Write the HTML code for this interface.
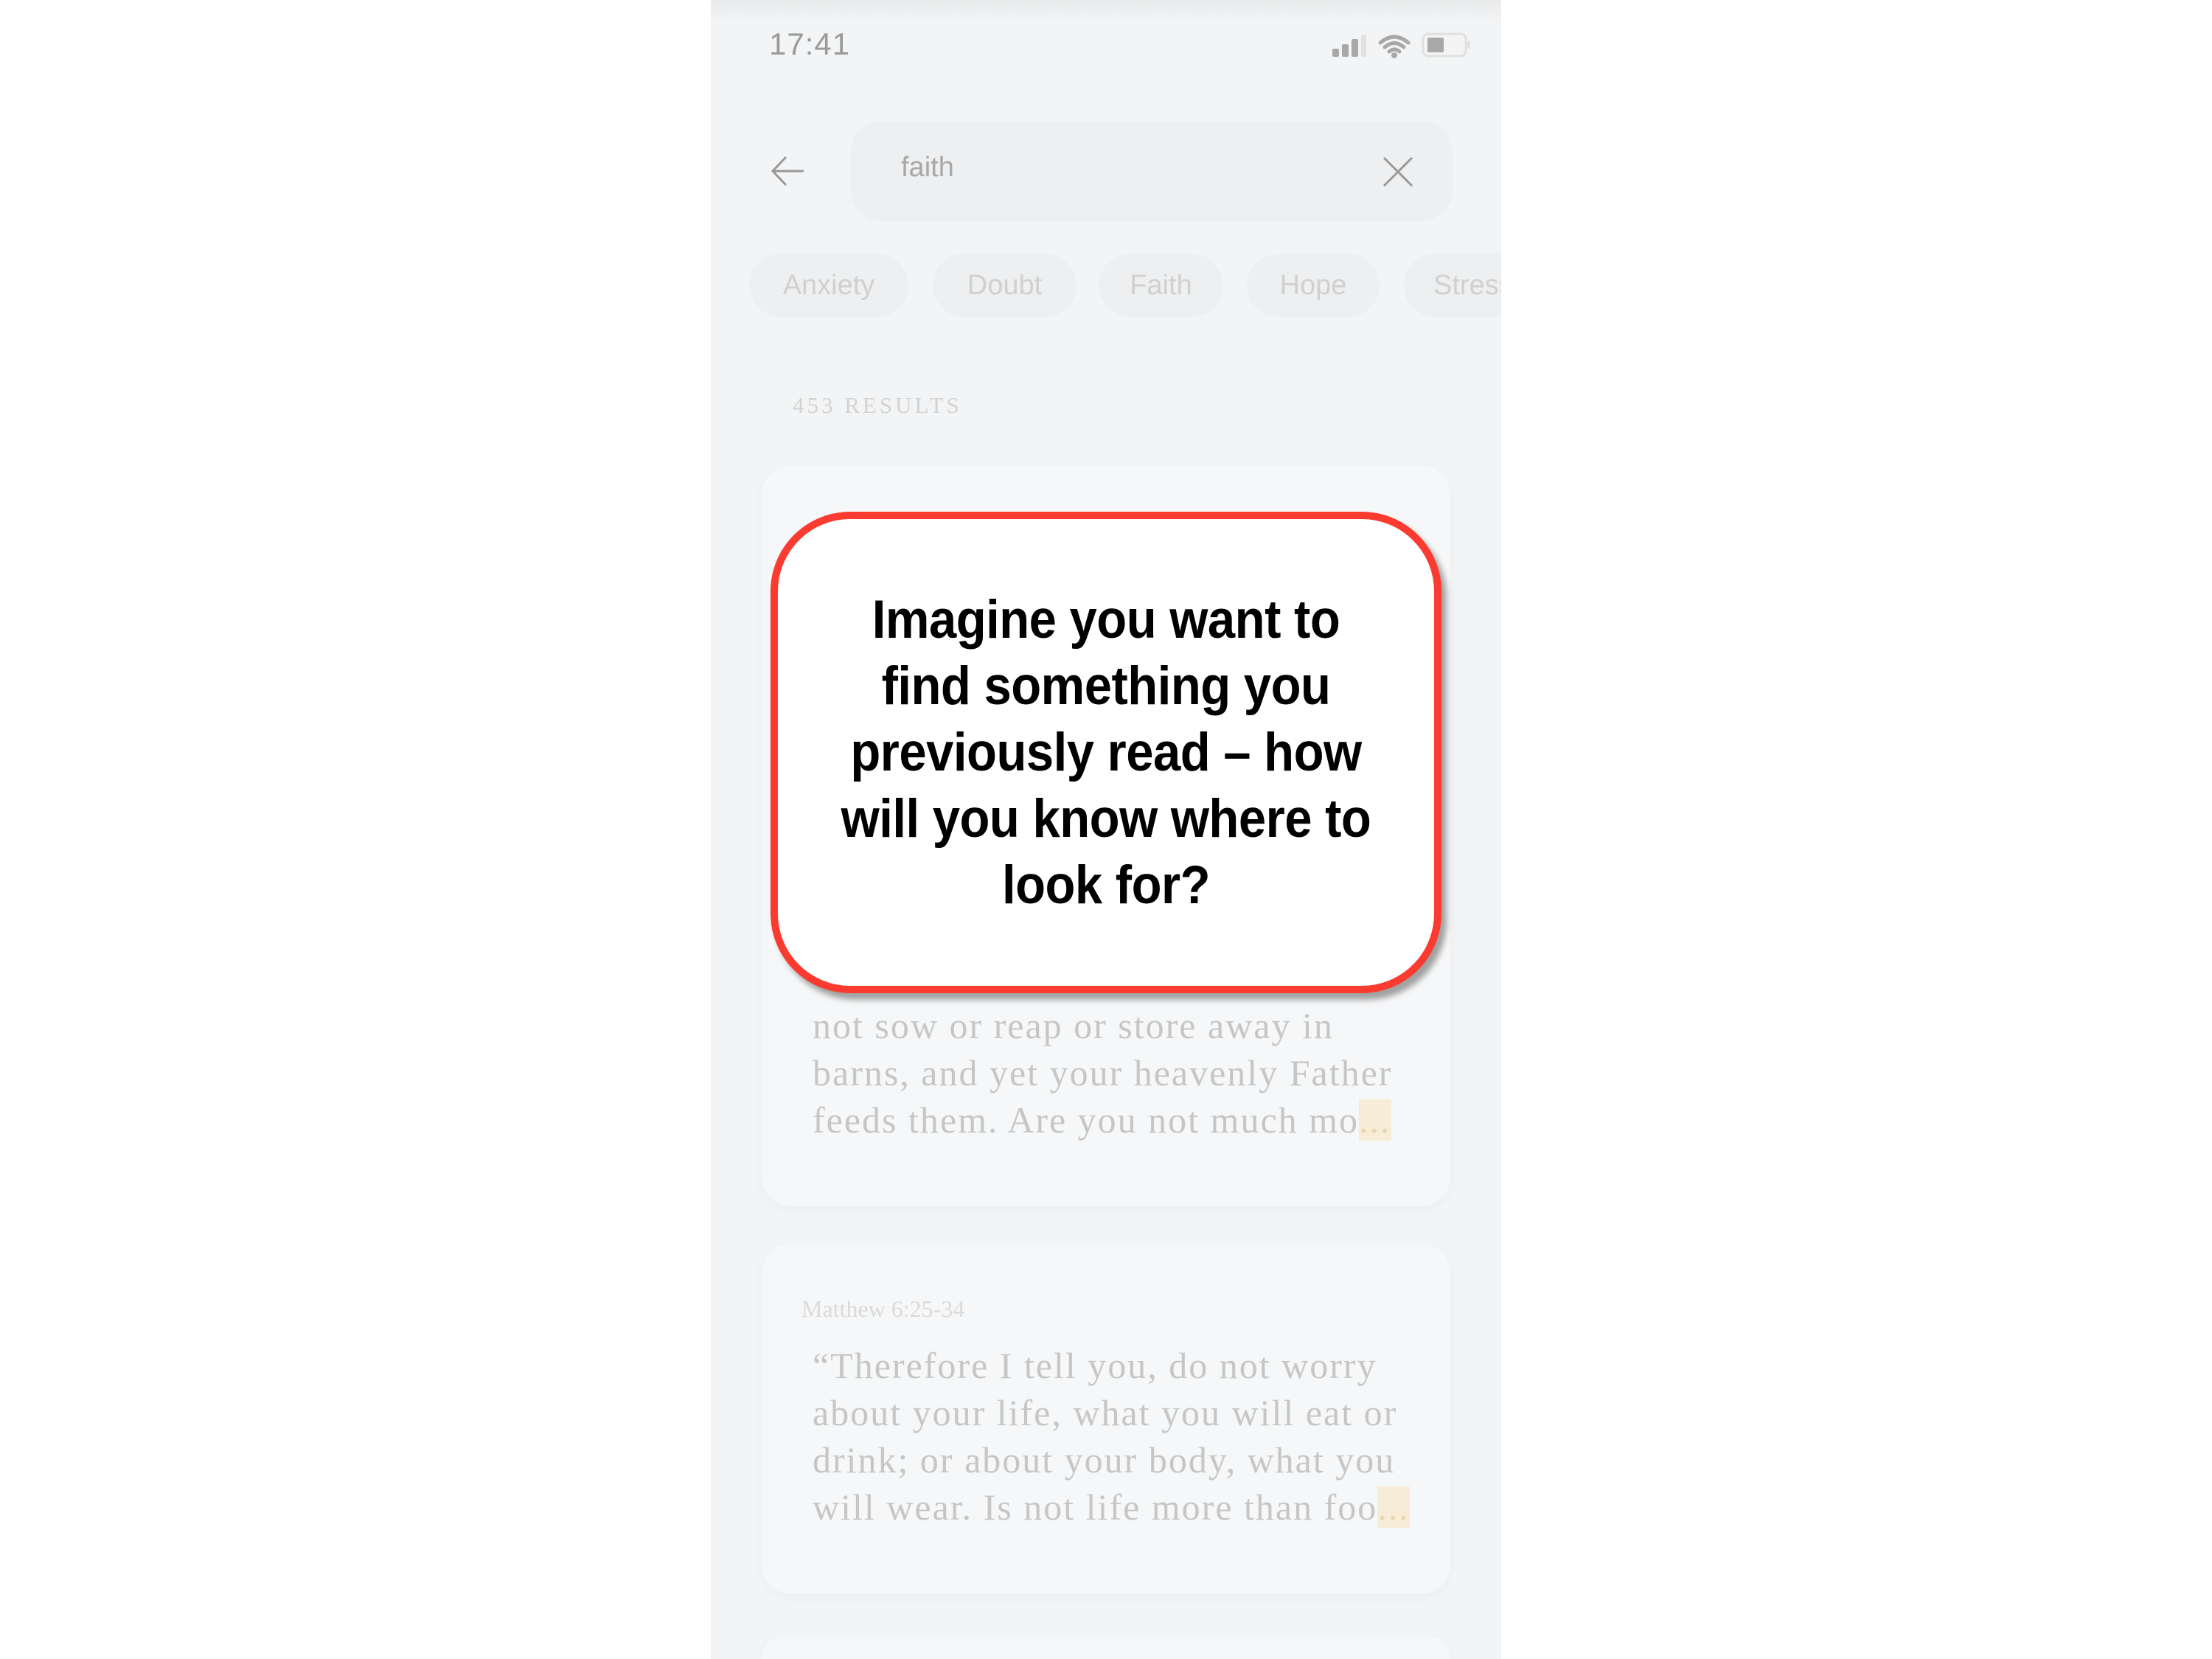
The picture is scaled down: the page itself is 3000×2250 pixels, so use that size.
<!DOCTYPE html>
<html><head><meta charset="utf-8"><style>
*{margin:0;padding:0;box-sizing:border-box}
html,body{width:3000px;height:2250px;background:#fff;overflow:hidden;position:relative;font-family:"Liberation Sans",sans-serif}
.phone{position:absolute;left:964px;top:0;width:1072px;height:2250px;background:#f3f4f5;overflow:hidden}
.topbar{position:absolute;left:0;top:0;width:1072px;height:30px;background:linear-gradient(#e9eaeb,#f3f4f5)}
.abs{position:absolute}
.time{left:79px;top:36px;font-size:42px;color:#9a9a9a;letter-spacing:1px}
.search{left:190px;top:165px;width:816px;height:135px;border-radius:40px;background:#eeeff0}
.faith{left:258px;top:206px;font-size:38px;color:#a8a8a8}
.chip{position:absolute;top:344px;height:86px;border-radius:43px;background:#eeeff0;color:#d0d0d0;font-size:38px;line-height:86px;text-align:center}
.res{left:111px;top:532px;font-family:"Liberation Serif",serif;font-size:31px;color:#d2d2d2;letter-spacing:4px}
.card{position:absolute;background:#f6f7f8;border-radius:40px;box-shadow:0 4px 16px rgba(0,0,0,0.03)}
.verse{position:absolute;font-family:"Liberation Serif",serif;font-size:50px;letter-spacing:2px;color:#c6c6c6;line-height:64px;white-space:nowrap}
.ell{background:#f7ecd6;color:#e8d8b0}
.box{position:absolute;left:1045px;top:694px;width:910px;height:653px;border:10px solid #fb3b30;border-radius:108px;background:#fff;box-shadow:7px 9px 8px rgba(0,0,0,0.35);display:flex;align-items:center;justify-content:center;flex-direction:column}
.box div{font-weight:bold;font-size:67px;color:#000;line-height:90px;transform:scaleY(1.1);white-space:nowrap;letter-spacing:-0.5px}
</style></head><body>
<div class="phone">
<div class="topbar"></div>
<div class="abs time">17:41</div>
<svg class="abs" style="left:836px;top:40px" width="200" height="45" viewBox="0 0 200 45">
<g fill="#a8a8a8"><rect x="7" y="26" width="9" height="11" rx="2"/><rect x="20" y="20" width="9" height="17" rx="2"/><rect x="33" y="13" width="9" height="24" rx="2"/><rect x="46" y="7" width="7" height="30" rx="2" fill="#e2e2e2"/></g>
<path d="M72 18 Q91 2 110 18 M78 24 Q91 13 104 24 M84 30 Q91 24 98 30" stroke="#a8a8a8" stroke-width="5" fill="none" stroke-linecap="round"/>
<circle cx="91" cy="35" r="4" fill="#a8a8a8"/>
<rect x="130" y="6" width="58" height="30" rx="7" fill="none" stroke="#e0e0e0" stroke-width="3"/>
<rect x="136" y="11" width="22" height="20" rx="2" fill="#a8a8a8"/>
<rect x="190" y="16" width="4" height="10" rx="2" fill="#e0e0e0"/>
</svg>
<svg class="abs" style="left:76px;top:205px" width="55" height="55" viewBox="0 0 55 55"><path d="M50 27 H8 M26 8 L8 27 L26 46" stroke="#999" stroke-width="3" fill="none"/></svg>
<div class="abs search"></div>
<div class="abs faith">faith</div>
<svg class="abs" style="left:909px;top:210px" width="46" height="46" viewBox="0 0 46 46"><path d="M4 4 L42 42 M42 4 L4 42" stroke="#999" stroke-width="3"/></svg>
<div class="chip" style="left:52px;width:216px">Anxiety</div>
<div class="chip" style="left:301px;width:195px">Doubt</div>
<div class="chip" style="left:526px;width:169px">Faith</div>
<div class="chip" style="left:727px;width:180px">Hope</div>
<div class="chip" style="left:940px;width:200px;text-align:left;padding-left:40px">Stress</div>
<div class="abs res">453 RESULTS</div>
<div class="card" style="left:69px;top:631px;width:934px;height:1005px"></div>
<div class="verse" style="left:138px;top:1359px">not sow or reap or store away in<br>barns, and yet your heavenly Father<br>feeds them. Are you not much mo<span class="ell">...</span></div>
<div class="card" style="left:69px;top:1686px;width:934px;height:476px"></div>
<div class="abs" style="left:123px;top:1757px;font-family:'Liberation Serif',serif;font-size:32px;color:#dadada">Matthew 6:25-34</div>
<div class="verse" style="left:138px;top:1820px"> “Therefore I tell you, do not worry<br>about your life, what you will eat or<br>drink; or about your body, what you<br>will wear. Is not life more than foo<span class="ell">...</span></div>
<div class="card" style="left:69px;top:2219px;width:934px;height:31px;border-radius:40px 40px 0 0"></div>
</div>
<div class="box">
<div>Imagine you want to</div>
<div>find something you</div>
<div>previously read – how</div>
<div>will you know where to</div>
<div>look for?</div>
</div>
</body></html>
